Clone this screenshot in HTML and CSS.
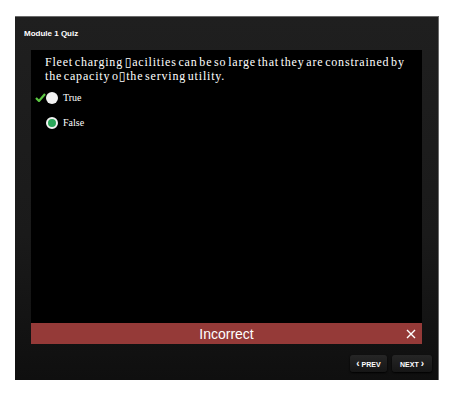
FILE: index.html
```html
<!DOCTYPE html>
<html lang="en">
<head>
  <meta charset="UTF-8" />
  <title>Module 1 Quiz</title>
  <link rel="stylesheet" href="styles.css">
</head>
<body>
  <div class="player">
    <div class="title">Module 1 Quiz</div>

    <div class="stage">
      <p class="question">Fleet charging &#9647;acilities can be so large that they are constrained by the capacity o&#9647;the serving utility.</p>

      <div class="option">
        <span class="mark">
          <svg width="11" height="9" viewBox="0 0 11 9"><path d="M1 5 L4 8 L10 1" fill="none" stroke="#5cc742" stroke-width="2.2"/></svg>
        </span>
        <span class="radio"></span>
        <span class="label">True</span>
      </div>
      <div class="option">
        <span class="mark"></span>
        <span class="radio checked"></span>
        <span class="label">False</span>
      </div>
    </div>

    <div class="feedback">
      <span>Incorrect</span>
      <svg class="close" width="10" height="10" viewBox="0 0 10 10"><path d="M1 1 L9 9 M9 1 L1 9" stroke="#fff" stroke-width="1.4"/></svg>
    </div>

    <div class="nav">
      <button class="btn prev"><span class="chev">&#x2039;</span> PREV</button>
      <button class="btn next">NEXT <span class="chev">&#x203A;</span></button>
    </div>
  </div>
</body>
</html>
```

FILE: styles.css
```css
body {
  margin: 0;
  background: #fff;
  font-family: "Liberation Sans", Arial, sans-serif;
}
.player {
  margin: 16px 0 0 15px;
  width: 424px;
  height: 364px;
  background: linear-gradient(#1f1f1f, #1a1a1a 60%, #0f0f0f);
  border-top: 1px solid #6a6a6a;
  border-right: 1px solid #6a6a6a;
  box-sizing: border-box;
  padding: 0 16px 0 16px;
}
.title {
  color: #fff;
  font-weight: bold;
  font-size: 8px;
  height: 33px;
  line-height: 33px;
  margin-left: -7px;
}
.stage {
  background: #000;
  height: 273px;
  padding: 5px 10px 0 14px;
  box-sizing: border-box;
}
.question {
  margin: 0 0 2px 0;
  color: #fff;
  font-family: "Liberation Serif", "DejaVu Sans", serif;
  font-size: 12px;
  line-height: 14px;
  letter-spacing: 0.8px;
  word-spacing: -2px;
}
.option {
  display: flex;
  align-items: center;
  height: 25px;
  margin-left: -10px;
}
.mark {
  width: 11px;
  height: 9px;
  display: flex;
}
.radio {
  width: 12px;
  height: 12px;
  border-radius: 50%;
  background: #f2f2f2;
  box-sizing: border-box;
}
.radio.checked {
  border: 2px solid #f2f2f2;
  background: #2aa65a;
}
.label {
  color: #fff;
  font-family: "Liberation Serif", "Times New Roman", serif;
  font-size: 10px;
  margin-left: 5px;
}
.feedback {
  position: relative;
  background: #953a38;
  color: #fff;
  height: 21px;
  display: flex;
  align-items: center;
  justify-content: center;
  font-size: 14px;
}
.close {
  position: absolute;
  right: 6px;
  top: 6px;
}
.nav {
  display: flex;
  justify-content: flex-end;
  gap: 5px;
  margin-top: 11px;
  margin-right: -10px;
}
.btn {
  height: 17px;
  padding: 0;
  border: none;
  border-radius: 3px;
  background: linear-gradient(#262626, #161616);
  box-shadow: 0 1px 2px #000;
  color: #fff;
  font-family: "Liberation Sans", Arial, sans-serif;
  font-weight: bold;
  font-size: 7px;
}
.prev {
  width: 37px;
}
.next {
  width: 40px;
}
.chev {
  font-size: 10px;
  line-height: 7px;
}
```
